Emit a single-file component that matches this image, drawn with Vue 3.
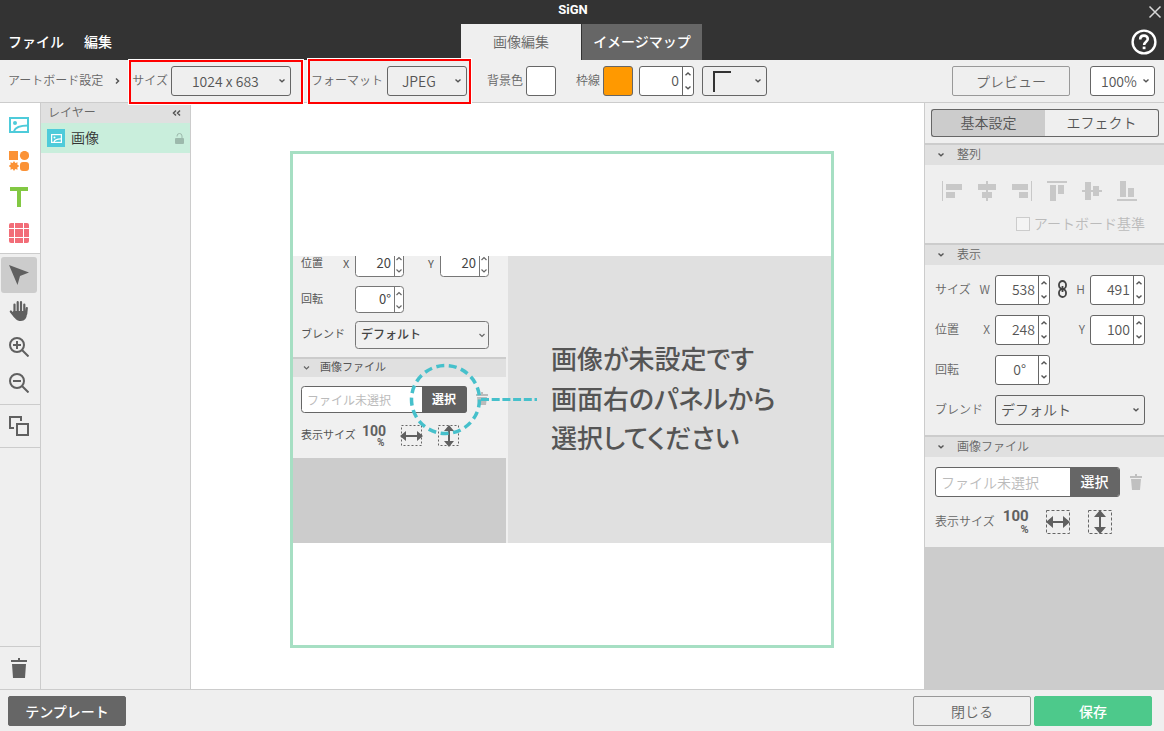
<template>
  <div class="app">
    <header class="header">
      <div class="title-row">
        <h1 class="title">SiGN</h1>
        <button class="close" type="button" aria-label="Close">
          <svg width="14" height="14" viewBox="0 0 14 14"><path d="M1.5 1.5l11 11M12.5 1.5l-11 11" stroke="#d8d8d8" stroke-width="1.5" /></svg>
        </button>
      </div>
      <div class="menu-row">
        <nav class="menu">
          <button type="button">ファイル</button>
          <button type="button">編集</button>
        </nav>
        <div class="tabs">
          <button class="tab tab--active" type="button">画像編集</button>
          <button class="tab" type="button">イメージマップ</button>
        </div>
        <button class="help" type="button" aria-label="Help">
          <svg width="26" height="26" viewBox="0 0 26 26" fill="none" stroke="#fff">
            <circle cx="13" cy="13" r="11.4" stroke-width="2.4" />
            <path d="M9.2 10.4C9.2 7.9 10.9 6.6 13 6.6s3.8 1.4 3.8 3.5c0 2.6-3.7 2.9-3.7 6" stroke-width="2.6" />
            <path d="M13.1 17.6v2.6" stroke-width="2.8" />
          </svg>
        </button>
      </div>
    </header>

    <div class="toolbar">
      <span class="label">アートボード設定</span>
      <svg class="crumb" width="6" height="8" viewBox="0 0 6 8"><path d="M1 1.500l2.500 2.500L1 6.500" fill="none" stroke="#555" stroke-width="1.500" /></svg>

      <div class="marked marked--size">
        <label class="label" for="size">サイズ</label>
        <span class="select">
          <select id="size" class="center"><option>1024 x 683</option></select>
          <svg class="chev" viewBox="0 0 8 6"><path d="M1.500 1.500L4 3.800l2.500-2.300" /></svg>
        </span>
      </div>
      <div class="marked marked--format">
        <label class="label" for="format">フォーマット</label>
        <span class="select">
          <select id="format"><option>JPEG</option></select>
          <svg class="chev" viewBox="0 0 8 6"><path d="M1.500 1.500L4 3.800l2.500-2.300" /></svg>
        </span>
      </div>

      <div class="group">
        <label class="label" for="bg">背景色</label>
        <button id="bg" class="swatch" type="button"></button>
      </div>
      <div class="group">
        <label class="label" for="border-color">枠線</label>
        <button id="border-color" class="swatch swatch--orange" type="button"></button>
      </div>
      <span class="number">
        <input v-model="borderWidth" type="text" aria-label="枠線の太さ" />
        <span class="steps">
          <button type="button" aria-label="+" @click="borderWidth++"><svg viewBox="0 0 8 6"><path d="M1.500 4.300L4 2l2.500 2.300" /></svg></button>
          <button type="button" aria-label="-" @click="borderWidth--"><svg viewBox="0 0 8 6"><path d="M1.500 1.500L4 3.800l2.500-2.300" /></svg></button>
        </span>
      </span>
      <button class="line-style" type="button" aria-label="線の種類">
        <svg width="20" height="22" viewBox="0 0 20 22"><path d="M2 22V2H19" fill="none" stroke="#333" stroke-width="2" /></svg>
        <svg class="chev-inline" viewBox="0 0 8 6"><path d="M1.500 1.500L4 3.800l2.500-2.300" /></svg>
      </button>

      <button class="btn preview" type="button">プレビュー</button>
      <span class="select select--zoom">
        <select aria-label="表示倍率"><option>100%</option></select>
        <svg class="chev" viewBox="0 0 8 6"><path d="M1.500 1.500L4 3.800l2.500-2.300" /></svg>
      </span>
    </div>

    <main class="workspace">
      <aside class="tools">
        <div class="tool-group tool-group--add">
          <button type="button" aria-label="画像">
            <svg width="20" height="16" viewBox="0 0 20 16" fill="none" stroke="#4ecbda" stroke-width="2">
              <rect x="1" y="1" width="18" height="14" /><circle cx="6" cy="6" r="2" fill="#4ecbda" stroke="none" />
              <path d="M5 14c1.500-4 6-5.500 14-5.500" />
            </svg>
          </button>
          <button type="button" aria-label="図形">
            <svg width="20" height="20" viewBox="0 0 20 20" fill="#fb9236">
              <rect width="9" height="9" /><circle cx="15.500" cy="4.500" r="4.600" /><rect x="11" y="11" width="9" height="9" rx="3" />
              <path d="M5 10l1.300 2 2.300-.7-.3 2.300 2 1.400-2 1.400.3 2.300-2.300-.7L5 20l-1.300-2-2.300.7.3-2.300-2-1.400 2-1.400-.3-2.300 2.300.7z" />
            </svg>
          </button>
          <button type="button" aria-label="テキスト">
            <svg width="20" height="20" viewBox="0 0 20 20"><path d="M1 2h18M10 2v18" fill="none" stroke="#82c843" stroke-width="4" /></svg>
          </button>
          <button type="button" aria-label="表">
            <svg width="20" height="20" viewBox="0 0 20 20"><rect width="20" height="20" rx="2" fill="#f26d78" /><path d="M5.500 0v20M14.500 0v20M0 5.500h20M0 14.500h20" stroke="#fff" stroke-width="1" /></svg>
          </button>
        </div>
        <div class="tool-group">
          <button class="active" type="button" aria-label="選択">
            <svg width="20" height="20" viewBox="0 0 20 20" fill="#606060"><path d="M0 0l20 7.500-9 3.500-2.500 9z" /></svg>
          </button>
          <button type="button" aria-label="移動">
            <svg width="20" height="22" viewBox="0 0 20 22" fill="none" stroke="#606060" stroke-width="2.200" stroke-linecap="round">
              <path d="M5.500 12V4.500M8.700 11V2.200M12 11V2.200M15.300 12V4.500M17.800 8l-.6 6M1.800 11.500l4 5" />
              <path d="M4.500 11h13.300v3.500c0 3.500-2 6.500-6 6.500-4.500 0-5.500-2-9-8z" fill="#606060" stroke="none" />
            </svg>
          </button>
          <button type="button" aria-label="拡大">
            <svg width="20" height="20" viewBox="0 0 20 20" fill="none" stroke="#606060" stroke-width="2"><circle cx="8" cy="8" r="7" /><path d="M4 8h8M8 4v8M13 13l6.500 6.500" /></svg>
          </button>
          <button type="button" aria-label="縮小">
            <svg width="20" height="20" viewBox="0 0 20 20" fill="none" stroke="#606060" stroke-width="2"><circle cx="8" cy="8" r="7" /><path d="M4 8h8M13 13l6.500 6.500" /></svg>
          </button>
        </div>
        <div class="tool-group">
          <button type="button" aria-label="重ね順">
            <svg width="20" height="20" viewBox="0 0 20 20" fill="none" stroke="#606060" stroke-width="2"><path d="M5 12H1V1h11v4" /><rect x="8" y="8" width="11" height="11" /></svg>
          </button>
        </div>
        <div class="tool-group tool-group--trash">
          <button type="button" aria-label="削除">
            <svg width="16" height="20" viewBox="0 0 16 20" fill="#606060"><path d="M0 2h7V0h2v2h7v2H0zM1 6h14l-1 14H2z" /></svg>
          </button>
        </div>
      </aside>

      <aside class="layers">
        <div class="layers-head">
          <span class="label">レイヤー</span>
          <svg width="9" height="8" viewBox="0 0 9 8" fill="none" stroke="#555" stroke-width="1.500"><path d="M4 1.500L1.500 4 4 6.500M8 1.500L5.500 4 8 6.500" /></svg>
        </div>
        <div class="layer">
          <span class="layer-icon">
            <svg width="11" height="9" viewBox="0 0 11 9" fill="none" stroke="#fff" stroke-width="1.200"><rect x=".6" y=".6" width="9.800" height="7.800" /><path d="M3 8c.5-2 3-3.200 7-3.200" /><circle cx="3.500" cy="3.500" r="1" fill="#fff" stroke="none" /></svg>
          </span>
          <span class="layer-name">画像</span>
          <svg width="9" height="11" viewBox="0 0 9 11"><rect y="5" width="9" height="6" rx="1" fill="#9cb9ac" /><path d="M2 3.500V3a2.500 2.500 0 015 0v2" fill="none" stroke="#9cb9ac" /></svg>
        </div>
      </aside>

      <section class="canvas">
        <div class="artboard">
          <svg class="guide" width="538" height="287" viewBox="0 0 538 287">
            <rect width="538" height="287" fill="#e0e0e0" />
            <rect width="215" height="287" fill="#f0f0f0" />
            <rect y="202" width="213" height="85" fill="#ccc" />
            <g fill="#fff" stroke="#777" stroke-width="1">
              <path d="M62.500-5V17.500a3 3 0 003 3h42a3 3 0 003-3V-5M101.500-5V20" />
              <path d="M147.500-5V17.500a3 3 0 003 3h42a3 3 0 003-3V-5M186.500-5V20" />
              <rect x="62.500" y="30.500" width="48" height="26" rx="3" />
              <path d="M101.500 31v25" />
              <rect x="62.500" y="65.500" width="133" height="27" rx="3" fill="#f0f0f0" />
            </g>
            <path d="M103.500 4l2.500-2.500 2.500 2.500M103.500 13.500l2.500 2.500 2.500-2.500M188.500 4l2.500-2.500 2.500 2.500M188.500 13.500l2.500 2.500 2.500-2.500M103.500 39l2.500-2.500 2.500 2.500M103.500 49.500l2.500 2.500 2.500-2.500M186.500 78l2.500 2.500 2.500-2.500" fill="none" stroke="#666" stroke-width="1.200" />
            <rect y="101" width="213" height="20" fill="#e0e0e0" />
            <rect y="101" width="213" height="2" fill="#ccc" />
            <path d="M11 110.500l2.500 2.500 2.500-2.500" fill="none" stroke="#666" stroke-width="1.200" />
            <rect x="8.500" y="130.500" width="165" height="26" rx="3" fill="#fff" stroke="#666" />
            <path d="M129 130h42a3 3 0 013 3v21a3 3 0 01-3 3h-42z" fill="#606060" />
            <g class="g-label">
              <text x="8" y="11">位置</text><text x="50" y="12">X</text><text x="135" y="12">Y</text>
              <text x="8" y="47">回転</text><text x="8" y="82">ブレンド</text>
              <text x="27" y="115">画像ファイル</text><text x="8" y="183">表示サイズ</text>
            </g>
            <g class="g-value">
              <text x="98" y="12" text-anchor="end">20</text><text x="183" y="12" text-anchor="end">20</text>
              <text x="98" y="48" text-anchor="end">0°</text>
            </g>
            <text class="g-blend" x="68" y="83">デフォルト</text>
            <text class="g-empty" x="14" y="149">ファイル未選択</text>
            <text class="g-pick" x="139" y="148">選択</text>
            <path d="M183 138h5v-2h2v2h5v2h-12zM184 141h10l-1 8h-8z" fill="#bbb" />
            <text class="g-hundred" x="69" y="180">100</text><text class="g-percent" x="84" y="190">%</text>
            <g fill="none" stroke="#666" stroke-dasharray="2 2">
              <rect x="108.500" y="169.500" width="20" height="20" /><rect x="145.500" y="169.500" width="20" height="20" />
            </g>
            <path d="M107 180l6-5v4h11v-4l6 5-6 5v-4h-11v4zM156 169l5 6h-4v10h4l-5 6-5-6h4v-10h-4z" fill="#606060" />
            <circle cx="152.500" cy="143.500" r="34" fill="none" stroke="#46c0cb" stroke-width="3.500" stroke-dasharray="8 4.560" />
            <path d="M188 143.500h56" stroke="#46c0cb" stroke-width="3" stroke-dasharray="8 2.700" />
            <g class="g-message">
              <text x="258" y="113">画像が未設定です</text>
              <text x="258" y="153">画面右のパネルから</text>
              <text x="258" y="192">選択してください</text>
            </g>
          </svg>
        </div>
      </section>

      <aside class="panel">
        <div class="panel-tabs">
          <button class="active" type="button">基本設定</button>
          <button type="button">エフェクト</button>
        </div>

        <section class="section">
          <h2><svg viewBox="0 0 8 6"><path d="M1.500 1.500L4 3.800l2.500-2.300" /></svg><span class="label">整列</span></h2>
          <div class="align">
            <div class="align-icons">
              <button v-for="a in aligns" :key="a.label" type="button" :aria-label="a.label" disabled>
                <svg width="20" height="20" viewBox="0 0 20 20" fill="#c8c8c8"><path :d="a.d" /></svg>
              </button>
            </div>
            <div class="check">
              <input id="base" type="checkbox" disabled />
              <label for="base">アートボード基準</label>
            </div>
          </div>
        </section>

        <section class="section">
          <h2><svg viewBox="0 0 8 6"><path d="M1.500 1.500L4 3.800l2.500-2.300" /></svg><span class="label">表示</span></h2>
          <div class="fields">
            <template v-for="f in fields" :key="f.id">
              <label class="field-label" :class="{ 'field-label--second': f.second }" :for="f.id">
                <span v-if="f.name">{{ f.name }}</span>
                <svg v-if="f.link" width="9" height="18" viewBox="0 0 9 18" fill="none" stroke="#444" stroke-width="1.800"><rect x="1" y="1" width="7" height="8" rx="3.500" /><rect x="1" y="9" width="7" height="8" rx="3.500" /><path d="M4.500 6v6" /></svg>
                <span class="axis">{{ f.axis }}</span>
              </label>
              <span class="number">
                <input :id="f.id" v-model="f.value" type="text" :class="{ deg: f.id === 'rotate' }" />
                <span class="steps">
                  <button type="button" aria-label="+"><svg viewBox="0 0 8 6"><path d="M1.500 4.300L4 2l2.500 2.300" /></svg></button>
                  <button type="button" aria-label="-"><svg viewBox="0 0 8 6"><path d="M1.500 1.500L4 3.800l2.500-2.300" /></svg></button>
                </span>
              </span>
            </template>
            <label class="field-label blend-label" for="blend">ブレンド</label>
            <span class="select select--blend">
              <select id="blend"><option>デフォルト</option></select>
              <svg class="chev" viewBox="0 0 8 6"><path d="M1.500 1.500L4 3.800l2.500-2.300" /></svg>
            </span>
          </div>
        </section>

        <section class="section">
          <h2><svg viewBox="0 0 8 6"><path d="M1.500 1.500L4 3.800l2.500-2.300" /></svg><span class="label">画像ファイル</span></h2>
          <div class="file">
            <div class="file-row">
              <div class="file-box">
                <input type="text" placeholder="ファイル未選択" aria-label="画像ファイル" />
                <button type="button">選択</button>
              </div>
              <button class="file-trash" type="button" aria-label="削除">
                <svg width="12" height="16" viewBox="0 0 12 16" fill="#c0c0c0"><path d="M0 2h5V0h2v2h5v2H0zM1 5h10l-1 11H2z" /></svg>
              </button>
            </div>
            <div class="file-row">
              <span class="label">表示サイズ</span>
              <button class="hundred" type="button"><span>100</span><span class="pct">%</span></button>
              <button class="fit" type="button" aria-label="幅に合わせる">
                <svg width="26" height="26" viewBox="0 0 26 26"><rect x="1.500" y="1.500" width="23" height="23" fill="none" stroke="#666" stroke-dasharray="3 2" /><path d="M1 13l7-6v5h10V7l7 6-7 6v-5H8v5z" fill="#606060" /></svg>
              </button>
              <button class="fit" type="button" aria-label="高さに合わせる">
                <svg width="26" height="26" viewBox="0 0 26 26"><rect x="1.500" y="1.500" width="23" height="23" fill="none" stroke="#666" stroke-dasharray="3 2" /><path d="M13 1l6 7h-5v10h5l-6 7-6-7h5V8H7z" fill="#606060" /></svg>
              </button>
            </div>
          </div>
        </section>
      </aside>
    </main>

    <footer class="footer">
      <button class="btn btn--dark" type="button">テンプレート</button>
      <button class="btn btn--close" type="button">閉じる</button>
      <button class="btn btn--save" type="button">保存</button>
    </footer>
  </div>
</template>

<script setup>
import { ref, reactive } from 'vue'

const borderWidth = ref(0)

const fields = reactive([
  { id: 'w', name: 'サイズ', axis: 'W', value: '538' },
  { id: 'h', axis: 'H', value: '491', link: true, second: true },
  { id: 'x', name: '位置', axis: 'X', value: '248' },
  { id: 'y', axis: 'Y', value: '100', second: true },
  { id: 'rotate', name: '回転', value: '0°' },
])

const aligns = [
  { label: '左揃え', d: 'M0 0h1v20H0zM4 3h16v6H4zM4 11h9v6H4z' },
  { label: '左右中央揃え', d: 'M9 0h2v20H9zM1 3h18v6H1zM5 11h10v6H5z' },
  { label: '右揃え', d: 'M19 0h1v20h-1zM0 3h16v6H0zM7 11h9v6H7z' },
  { label: '上揃え', d: 'M0 0h20v2H0zM3 4h6v16H3zM11 4h6v9h-6z' },
  { label: '上下中央揃え', d: 'M0 9h20v2H0zM3 1h6v18H3zM11 5h6v10h-6z' },
  { label: '下揃え', d: 'M0 18h20v2H0zM3 0h6v16H3zM11 7h6v9h-6z' },
]
</script>

<style>
body { margin: 0; }
</style>

<style scoped>
.app {
  min-height: 100vh;
  display: flex;
  flex-direction: column;
  font-family: "Noto Sans CJK JP", sans-serif;
  font-size: 14px;
  font-weight: 350;
  color: #555;
  background: #efefef;
}
* { box-sizing: border-box; }
button, input, select {
  font: inherit;
  color: inherit;
  margin: 0;
  padding: 0;
  border: 0;
  background: none;
}
button { display: flex; align-items: center; justify-content: center; }
h1, h2 { margin: 0; }
svg { display: block; flex-shrink: 0; }

/* header */
.header { background: #333; color: #fff; }
.title-row { display: flex; height: 24px; }
.title {
  flex: 1;
  text-align: center;
  font-family: Roboto, sans-serif;
  font-size: 13px;
  line-height: 20px;
  font-weight: 700;
}
.close { width: 18px; }
.menu-row {
  display: grid;
  grid-template-columns: 1fr auto 1fr;
  height: 36px;
}
.menu { display: flex; gap: 20px; padding-left: 8px; font-weight: 500; }
.menu button, .tab { padding-bottom: 3px; }
.tabs { display: flex; gap: 1px; padding-right: 1px; }
.tab { width: 120px; background: #666; font-weight: 500; }
.tab--active { background: #efefef; color: #666; font-weight: 350; }
.help { justify-self: end; margin-right: 7px; }

/* toolbar */
.toolbar {
  display: flex;
  align-items: center;
  height: 43px;
  padding: 0 9px 0 8px;
  border-bottom: 1px solid #ccc;
}
.label { padding-bottom: 3px; font-size: 12px; white-space: nowrap; color: #666; }
.crumb { margin: 0 8px 0 12px; }
.marked { position: relative; display: flex; align-items: center; }
.marked::after {
  content: "";
  position: absolute;
  inset: -6px -12px -8px -3px;
  border: 2px solid #f00;
  outline: 1px solid #fff;
  pointer-events: none;
}
.marked--size { gap: 3px; margin-left: 3px; }
.marked--size .select { width: 120px; }
.marked--format { gap: 4px; margin-left: 20px; }
.marked--format::after { inset: -7px -4px -8px -3px; }
.marked--format .select { width: 80px; }
.group { display: flex; align-items: center; gap: 3px; margin-left: 20px; }
.select { display: grid; align-items: center; height: 30px; }
.select select {
  grid-area: 1 / 1;
  width: 100%;
  height: 30px;
  padding: 0 14px;
  appearance: none;
  border: 1px solid #666;
  border-radius: 3px;
}
.select .center { padding: 0 20px; }
.chev { grid-area: 1 / 1; justify-self: end; margin-right: 5px; pointer-events: none; }
.chev, .chev-inline, .steps svg, h2 svg {
  width: 8px;
  height: 6px;
  fill: none;
  stroke: #555;
  stroke-width: 1.4;
}
.select--zoom { width: 65px; margin-left: 20px; }
.select--zoom select { padding: 0 10px; background: #fff; }
.swatch { width: 30px; height: 30px; background: #fff; border: 1px solid #666; border-radius: 3px; }
.swatch--orange { background: #ff9900; }
.number {
  display: flex;
  width: 55px;
  height: 30px;
  background: #fff;
  border: 1px solid #666;
  border-radius: 3px;
}
.number input { flex: 1; min-width: 0; padding: 0 3px 2px 0; text-align: right; }
.number .deg { padding-right: 12px; }
.toolbar .number { margin-left: 6px; }
.steps { display: flex; flex-direction: column; width: 11px; border-left: 1px solid #666; }
.steps button { flex: 1; }
.line-style {
  width: 65px;
  height: 30px;
  margin-left: 8px;
  padding: 0 4px 0 9px;
  justify-content: space-between;
  border: 1px solid #666;
  border-radius: 3px;
}
.btn { width: 118px; height: 30px; border: 1px solid #999; border-radius: 2px; color: #666; }
.preview { margin-left: auto; }

/* workspace */
.workspace { flex: 1; display: flex; }
.tools { display: flex; flex-direction: column; width: 41px; border-right: 1px solid #ccc; }
.tool-group { padding: 3px 3px 3px 1px; border-bottom: 1px solid #ccc; }
.tool-group--add { padding-top: 4px; padding-bottom: 2px; background: #fff; }
.tool-group button { width: 36px; height: 36px; border-radius: 3px; }
.tool-group .active { background: #ccc; }
.tool-group--trash { margin-top: auto; border-top: 1px solid #ccc; border-bottom: 0; }
.layers { width: 150px; border-right: 1px solid #ccc; }
.layers-head {
  display: flex;
  align-items: center;
  justify-content: space-between;
  height: 20px;
  padding: 0 9px 0 7px;
  background: #e0e0e0;
}
.layer { display: flex; align-items: center; height: 30px; padding: 0 6px; background: #c9eedc; color: #333; }
.layer-icon { display: grid; place-items: center; width: 18px; height: 18px; margin-right: 6px; background: #4ecbda; }
.layer-name { flex: 1; padding-bottom: 3px; }
.canvas {
  flex: 1;
  display: flex;
  align-items: center;
  justify-content: center;
  padding: 7px 0 0 9px;
  background: #fff;
}
.artboard {
  display: flex;
  align-items: center;
  height: 497px;
  border: 3px solid #a6dfc3;
}
.g-label { font-size: 11px; fill: #555; font-weight: 400; }
.g-value { font-size: 13px; fill: #444; font-weight: 400; }
.g-blend { font-size: 12px; fill: #444; font-weight: 500; }
.g-empty { font-size: 12px; fill: #bbb; font-weight: 400; }
.g-pick { font-size: 12px; fill: #fff; font-weight: 700; }
.g-hundred { font: 700 14px Roboto, sans-serif; fill: #606060; }
.g-percent { font: 700 10px Roboto, sans-serif; fill: #606060; }
.g-message { font-size: 26px; fill: #555; font-weight: 500; font-feature-settings: "palt"; }

/* right panel */
.panel { width: 240px; border-left: 1px solid #ccc; background: #ccc; }
.panel-tabs { display: flex; padding: 6px 5px 6px 6px; background: #efefef; }
.panel-tabs button {
  flex: 1;
  height: 28px;
  padding-bottom: 2px;
  border: 1px solid #666;
  border-left: 0;
  border-radius: 0 3px 3px 0;
}
.panel-tabs .active { background: #ccc; border-left: 1px solid #666; border-right: 0; border-radius: 3px 0 0 3px; }
.section { border-top: 2px solid #ccc; background: #efefef; }
h2 {
  display: flex;
  align-items: center;
  gap: 12px;
  height: 20px;
  padding-left: 12px;
  font-weight: inherit;
  background: #e0e0e0;
}
.align { padding: 16px 19px 9px 17px; }
.align-icons { display: flex; gap: 15px; }
.align-icons button { width: 20px; height: 20px; }
.check {
  display: flex;
  align-items: center;
  justify-content: flex-end;
  gap: 4px;
  height: 20px;
  margin-top: 13px;
  color: #bbb;
}
.check label { padding-bottom: 3px; }
.check input { appearance: none; width: 14px; height: 14px; border: 1px solid #ccc; background: #f4f4f4; }
.fields {
  display: grid;
  grid-template-columns: 55px 55px 30px 55px;
  gap: 10px 5px;
  padding: 10px 19px 10px 10px;
}
.field-label {
  display: flex;
  align-items: center;
  justify-content: space-between;
  padding-bottom: 3px;
  font-size: 12px;
  color: #666;
}
.field-label--second { padding-left: 3px; }
.axis { margin-left: auto; }
.blend-label { grid-column: 1; }
.select--blend { grid-column: 2 / 5; }
.select--blend select { padding: 0 5px 2px; }
.file { display: flex; flex-direction: column; gap: 10px; padding: 10px 19px 10px 10px; }
.file-row { display: flex; align-items: center; height: 30px; }
.file-box {
  display: flex;
  width: 185px;
  height: 30px;
  overflow: hidden;
  background: #fff;
  border: 1px solid #666;
  border-radius: 3px;
}
.file-box input { flex: 1; min-width: 0; padding-left: 5px; }
.file-box input::placeholder { color: #bbb; opacity: 1; }
.file-box button { width: 49px; padding-bottom: 2px; background: #666; color: #fff; font-weight: 500; }
.file-trash { margin-left: 10px; }
.hundred {
  flex-direction: column;
  align-items: flex-end;
  width: 26px;
  margin: 0 16px 0 8px;
  font: 700 15px/15px Roboto, sans-serif;
  color: #606060;
}
.pct { font-size: 11px; line-height: 11px; }
.fit { margin-right: 16px; }

/* footer */
.footer {
  display: flex;
  align-items: center;
  gap: 3px;
  height: 42px;
  padding: 0 12px 0 8px;
  border-top: 1px solid #ccc;
}
.btn--dark { background: #666; border-color: #666; color: #fff; font-weight: 500; }
.btn--close { margin-left: auto; }
.btn--save { background: #4dc98b; border-color: #4dc98b; color: #fff; font-weight: 500; }
</style>
